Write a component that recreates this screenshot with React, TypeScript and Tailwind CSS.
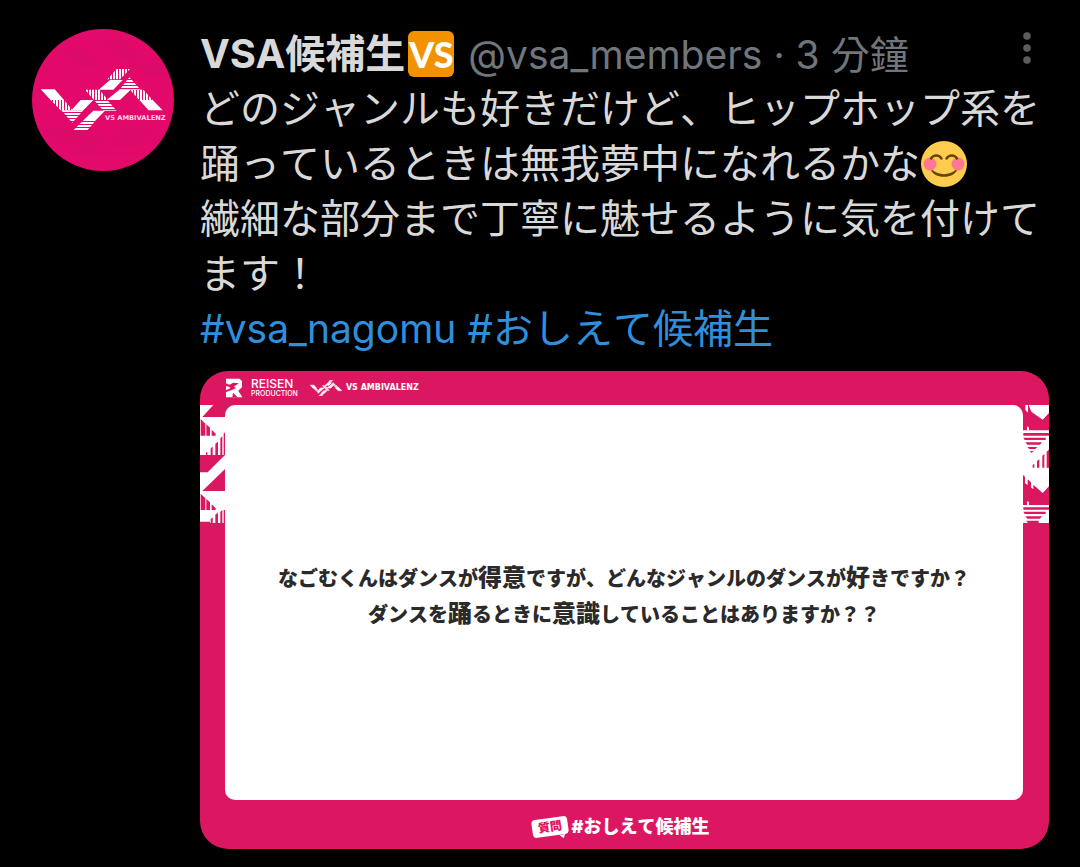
const LogoShapes = () => (
  <>
    <path d="M62 208h42l28 32H92zM182 240h38l-30 31h-36z" />
    <path d="M270 180h38l-28 29h-44zM220 272h35l-30 31h-37z" />
    <path d="M298 209h34l-32 31h-40zM358 240h40l30 31h-42z" />
  </>
)

const LogoVertical = () => (
  <>
    <path d="M92 240h40l26 31h-36z" />
    <path d="M290 147h40l-30 31h-38z" />
    <path d="M195 209h43l26 31h-42z" />
    <path d="M330 209h40l28 31h-40z" />
  </>
)

const LogoHorizontal = () => (
  <>
    <path d="M124 271h66l-33 37z" />
    <path d="M222 240h40l28 32h-40z" />
    <path d="M188 303h38l-26 30h-42z" />
    <path d="M328 172l34 37h-64z" />
  </>
)

const Avatar = () => (
  <svg viewBox="36 27 426 426" className="size-[142px] shrink-0 rounded-full" role="img" aria-label="VS AMBIVALENZ">
    <defs>
      <pattern id="bars-v" width="9" height="9" patternUnits="userSpaceOnUse">
        <rect width="6" height="9" fill="#fff" />
      </pattern>
      <pattern id="bars-h" width="9" height="9" patternUnits="userSpaceOnUse">
        <rect width="9" height="6" fill="#fff" />
      </pattern>
    </defs>
    <rect x="36" y="27" width="426" height="426" fill="#e20a6b" />
    <g fill="#d50f68" opacity="0.45">
      <path d="M120 90h70l50 50h-70zM250 60h60l60 60h-60zM330 130h90l30 40h-80z" />
      <path d="M60 320h80l50 50h-70zM200 350h70l-60 60h-60zM310 320h90l-50 60h-80z" />
    </g>
    <g fill="#fff">
      <LogoShapes />
    </g>
    <g fill="url(#bars-v)">
      <LogoVertical />
    </g>
    <g fill="url(#bars-h)">
      <LogoHorizontal />
    </g>
    <text x="255" y="301" fill="#ffd9e8" fontSize="20" fontWeight="700" fontFamily="DejaVu Sans, sans-serif">
      VS AMBIVALENZ
    </text>
  </svg>
)

// The stripes are too fine at this size, so they become a lighter tint.
const SmallLogo = () => (
  <svg viewBox="62 147 366 187" className="ml-3 h-4 w-8" aria-hidden="true">
    <g fill="#fff" stroke="#fff" strokeWidth="8">
      <LogoShapes />
    </g>
    <g fill="#fff" opacity="0.85">
      <LogoVertical />
      <LogoHorizontal />
    </g>
  </svg>
)

const SmileEmoji = () => (
  <svg viewBox="0 0 48 48" className="inline-block size-12 align-[-10px]" role="img" aria-label="😊">
    <circle cx="24" cy="24" r="23" fill="#ffcc4d" />
    <circle cx="10" cy="24" r="6.5" fill="#ff7892" />
    <circle cx="38" cy="24" r="6.5" fill="#ff7892" />
    <g fill="none" stroke="#664500" strokeWidth="2.4" strokeLinecap="round">
      <path d="M11 18.500c2.500-4 8-4 10.500 0M26.500 18.500c2.500-4 8-4 10.500 0" />
    </g>
    <path d="M12.500 30c6 5.500 17 5.500 23 0 .8-.4 1.500.4 1 1.200-5 7.500-20 7.500-25 0-.5-.8.300-1.600 1-1.200z" fill="#664500" />
  </svg>
)

const LeftPattern = () => (
  <svg viewBox="15 30 75 354" className="h-[118px] w-[25px] shrink-0" aria-hidden="true">
    <rect x="15" y="30" width="75" height="354" fill="#fff" />
    <g fill="#dc1762">
      <path d="M55 30h35v36H22z" />
      <path d="M17 72l14 14v36H17zM34 88l11 10v24H34zM50 104l12 12v6H50z" />
      <path d="M33 172h4v8h-4zM47 160l6-5v25h-6zM61 146l8-6v40h-8zM76 130l6-6v56h-6zM86 116l4-4v68h-4z" />
      <path d="M15 180h75l-52 52H15z" />
      <path d="M90 222v66H22z" />
      <path d="M17 296l14 14v35H17zM34 312l11 10v23H34zM50 328l12 12v5H50z" />
      <path d="M15 380h30v4H15zM47 372l6-5v17h-6zM61 359l8-6v31h-8zM76 350l6-5v39h-6zM86 345h4v39h-4z" />
    </g>
  </svg>
)

const RightPattern = () => (
  <svg viewBox="69 120 78 354" className="h-[118px] w-[26px] shrink-0" aria-hidden="true">
    <rect x="69" y="120" width="78" height="354" fill="#fff" />
    <g fill="#dc1762">
      <path d="M69 120h7v15l8 8v-23h2l8 20 34 24 19-20v52H69z" />
      <path d="M70 204h77v8H70zM70 218h67v7H74zM76 232h50l-6 7H82zM82 246h30l-6 6H88zM89 258h12l-6 6z" />
      <path d="M98 300l5-4v12h-5zM111 288l7-5v25h-7zM127 272l6-5v41h-6zM140 260l7-6v54h-7z" />
      <path d="M69 330l6 5v20l8 5v-17l10 9v16l7 4v-13l28 25 19-20v56H69z" />
      <path d="M70 427h77v7H70zM70 440h67v7H74zM76 454h50l-6 7H82zM78 467h38v7H84z" />
    </g>
    <path d="M81 184l6 4v8h-6zM81 408l6 4v8h-6z" fill="#fff" />
  </svg>
)

const ReisenLogo = () => (
  <svg viewBox="0 0 54 60" className="h-5 w-[18px]" aria-hidden="true">
    <path d="M3 2h41l7 8v18L40 38l12 20H3V42l8-6H3z" fill="#fff" />
    <path d="M3 16l10 4 12-6 16 2-14 10 6 4-12 6-18 6v-5l14-7-6-4-8-2zM24 44l14 14H22z" fill="#dc1762" />
  </svg>
)

const Kanji = ({ children }: { children: string }) => <span className="text-2xl leading-none">{children}</span>

const QuestionCard = () => (
  <figure className="mt-[15px] flex aspect-[849/478] w-full flex-col overflow-hidden rounded-[28px] bg-[#dc1762] text-white">
    <header className="flex h-[34px] items-center pl-[25px]">
      <ReisenLogo />
      <div className="ml-2 font-['Inter',sans-serif]">
        <p className="text-xs leading-[12px] font-medium">REISEN</p>
        <p className="text-[7px] leading-[8px] font-medium">PRODUCTION</p>
      </div>
      <SmallLogo />
      <p className="ml-1 font-['DejaVu_Sans',sans-serif] text-[8px] leading-none font-bold">VS AMBIVALENZ</p>
    </header>
    <div className="flex flex-1">
      <LeftPattern />
      <blockquote className="flex flex-1 flex-col items-center justify-center rounded-[10px] bg-white pb-3 text-center text-xl leading-9 font-black text-[#2b2a2b] [font-kerning:none]">
        <p>
          なごむくんはダンスが<Kanji>得意</Kanji>ですが、どんなジャンルのダンスが<Kanji>好</Kanji>きですか？
        </p>
        <p>
          ダンスを<Kanji>踊</Kanji>るときに<Kanji>意識</Kanji>していることはありますか？？
        </p>
      </blockquote>
      <RightPattern />
    </div>
    <figcaption className="flex h-[49px] items-center justify-center gap-1 pt-1 pr-2">
      <span className="relative -rotate-8 rounded-[4px] bg-white px-[6px] text-xs leading-[18px] font-black text-[#dc1762]">
        質問
        <svg viewBox="0 0 6 4" className="absolute top-full right-1 h-1 w-[6px]" aria-hidden="true">
          <path d="M0 0h6L4 4z" fill="#fff" />
        </svg>
      </span>
      <span className="text-lg leading-none font-black [font-kerning:none]">#おしえて候補生</span>
    </figcaption>
  </figure>
)

const App = () => {
  return (
    <div className="min-h-screen bg-black font-['Inter','Noto_Sans_CJK_JP',sans-serif] text-[#d9d9d9]" lang="ja">
      <article className="flex gap-[26px] pt-[26px] pr-[31px] pb-[18px] pl-8">
        <div className="pt-[3px]">
          <Avatar />
        </div>
        <div className="min-w-0 flex-1">
          <header className="flex h-[55px] items-center text-[40px] leading-[55px] whitespace-nowrap">
            <h1 className="font-bold">VSA候補生</h1>
            <span className="ml-[3px] flex size-[46px] items-center justify-center rounded-md bg-[#f39200] font-['Lato',sans-serif] text-4xl leading-none font-black text-white">
              VS
            </span>
            <p className="ml-[14px] text-[39px] text-[#71767b]">
              @vsa_members · 3{' '}
              <span className="font-['Noto_Sans_CJK_TC',sans-serif]" lang="zh-Hant">
                分鐘
              </span>
            </p>
            <button type="button" aria-label="More" className="mr-3 mb-3 ml-auto text-[#5c5c5e]">
              <svg viewBox="0 0 20 36" className="h-9 w-5" fill="currentColor" aria-hidden="true">
                <circle cx="10" cy="6" r="3.800" />
                <circle cx="10" cy="18" r="3.800" />
                <circle cx="10" cy="30" r="3.800" />
              </svg>
            </button>
          </header>
          <div className="text-[40px] leading-[55px] [font-kerning:none]">
            <p>
              どのジャンルも好きだけど、ヒップホップ系を踊っているときは無我夢中になれるかな
              <SmileEmoji />
            </p>
            <p>繊細な部分まで丁寧に魅せるように気を付けてます！</p>
            <p className="text-[#2f8fdd]">
              <a href="#vsa_nagomu" className="text-[39px]">
                #vsa_nagomu
              </a>{' '}
              <a href="#oshiete">#おしえて候補生</a>
            </p>
          </div>
          <QuestionCard />
        </div>
      </article>
    </div>
  )
}

export default App
